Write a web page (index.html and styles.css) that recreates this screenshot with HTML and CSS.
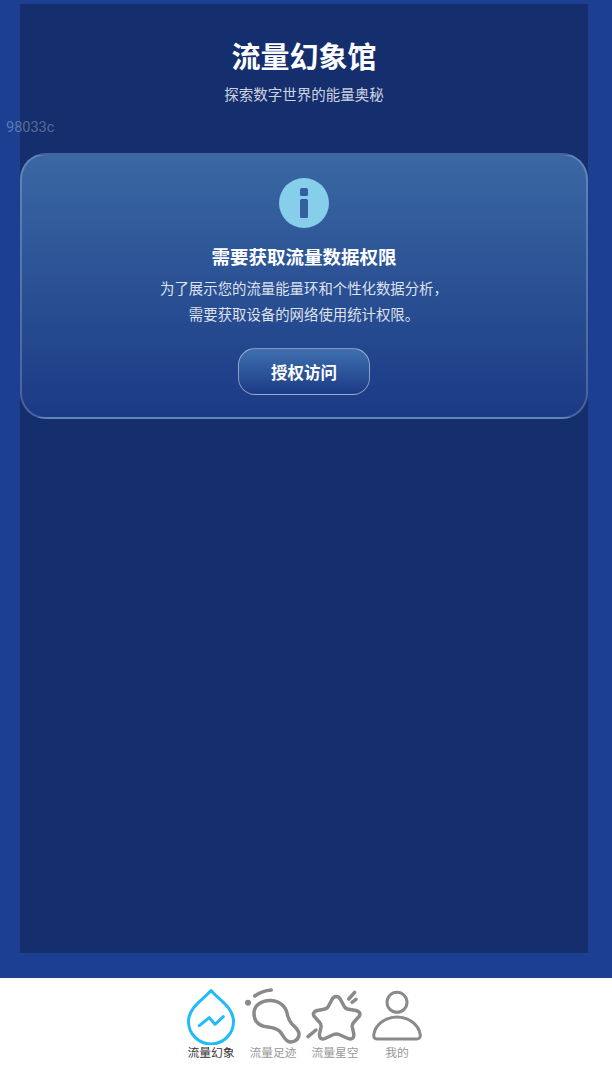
FILE: index.html
```html
<!DOCTYPE html>
<html lang="zh-CN">
<head>
    <meta charset="UTF-8">
    <meta name="viewport" content="width=device-width, initial-scale=1.0">
    <title>流量幻象馆</title>
    <link rel="stylesheet" href="styles.css">
</head>
<body>
    <div class="page">
        <main class="stage">
            <span class="debug-code">98033c</span>
            <div class="panel">
                <header class="head">
                    <h1>流量幻象馆</h1>
                    <p>探索数字世界的能量奥秘</p>
                </header>
                <section class="card">
                    <svg class="info-icon" viewBox="0 0 50 50" width="50" height="50">
                        <circle cx="25" cy="25" r="25" fill="#87ceeb"/>
                        <rect x="21" y="10" width="8" height="8" rx="1.5" fill="#34609f"/>
                        <rect x="21" y="21" width="8" height="19" rx="1.5" fill="#34609f"/>
                    </svg>
                    <h2>需要获取流量数据权限</h2>
                    <p>为了展示您的流量能量环和个性化数据分析，<br>需要获取设备的网络使用统计权限。</p>
                    <button type="button" class="auth-btn">授权访问</button>
                </section>
            </div>
        </main>
        <nav class="tabs">
            <a class="tab active" href="#">
                <svg viewBox="0 0 62 60" width="62" height="60" fill="none" stroke="currentColor" stroke-width="3" stroke-linecap="round" stroke-linejoin="round">
                    <path d="M31 5.500C38 14 53.500 22 53.500 36.500A22.500 22.500 0 0 1 8.500 36.500C8.500 22 24 14 31 5.500Z"/>
                    <path d="M19.300 40.700L29.300 32.700L35 39.300L43.300 31.700"/>
                </svg>
                <span>流量幻象</span>
            </a>
            <a class="tab" href="#">
                <svg viewBox="0 0 62 60" width="62" height="60" fill="none" stroke="currentColor" stroke-width="3.500" stroke-linecap="round" stroke-linejoin="round">
                    <path d="M12 28C12 20 20 15.500 28 15.500C37 15.500 43.500 21 45 28C46 33 47 36 50 39C54 43 57.500 46 57 50C56.500 55 51 58 46.500 56.500C42.500 55 41 50 38 46.500C35 43.500 31 42.500 26 42C20 41.500 16 39 14 36C12.500 33.500 12 31 12 28Z"/>
                    <path d="M12.700 11C17.500 7.500 23 5.500 29.300 5"/>
                    <circle cx="6" cy="17.700" r="1.300" fill="currentColor"/>
                </svg>
                <span>流量足迹</span>
            </a>
            <a class="tab" href="#">
                <svg viewBox="0 0 62 60" width="62" height="60" fill="none" stroke="currentColor" stroke-width="3.500" stroke-linecap="round" stroke-linejoin="round">
                    <path d="M28 14.500C30 10.500 34.500 10.500 36.500 14.500L40 21C41 23 42.500 24 44.500 24.300L52 25.500C56 26.500 57 29.500 54.500 32L50 37C48.500 38.500 48 40 48.300 42L49.800 49C50.300 53 47.500 55 44 53.500L35 49.500C33 48.700 31.500 48.700 29.500 49.500L21 53.500C17.500 55 15 53 15.500 49L17 42C17.300 40 16.800 38.500 15.300 37L10.800 32C8.300 29.500 9.300 26.500 13.300 25.500L20 24.300C22 24 23.500 23 24.500 21Z"/>
                    <path d="M44.700 14L50.700 7.300"/>
                    <path d="M48 17.300L52 14.300"/>
                    <path d="M4 51.700L12 45"/>
                </svg>
                <span>流量星空</span>
            </a>
            <a class="tab" href="#">
                <svg viewBox="0 0 62 60" width="62" height="60" fill="none" stroke="currentColor" stroke-width="3" stroke-linecap="round" stroke-linejoin="round">
                    <circle cx="31" cy="17.300" r="10"/>
                    <path d="M11 54H50.500Q54.800 54 54.200 49.500C52.500 39 42 32 31 32C20 32 9.500 39 7.800 49.500Q7.300 54 11 54Z"/>
                </svg>
                <span>我的</span>
            </a>
        </nav>
    </div>
</body>
</html>
```

FILE: styles.css
```css
body {
    font-family: "Noto Sans CJK SC", Roboto, sans-serif;
    margin: 0;
    padding: 0;
}
.page {
    display: flex;
    flex-direction: column;
    height: 1073px;
    overflow: hidden;
}
.stage {
    position: relative;
    flex: 1;
    display: flex;
    padding: 4px 24px 25px 20px;
    background-color: #1c3f92;
}
.debug-code {
    position: absolute;
    left: 6px;
    top: 118px;
    font-family: Roboto, sans-serif;
    font-size: 14.500px;
    line-height: 20px;
    color: rgba(255, 255, 255, 0.3);
}
.panel {
    flex: 1;
    background-color: #152e6e;
}
.head {
    text-align: center;
    height: 149px;
    box-sizing: border-box;
    padding-top: 31px;
}
.head h1 {
    margin: 0;
    font-size: 29px;
    line-height: 40px;
    font-weight: 700;
    color: #fff;
}
.head p {
    margin: 9px 0 0;
    font-size: 14.500px;
    line-height: 20px;
    color: rgba(255, 255, 255, 0.8);
}
.card {
    box-sizing: border-box;
    height: 266px;
    border: 2px solid rgba(255, 255, 255, 0.2);
    border-radius: 26px;
    background: linear-gradient(180deg, #3a68a3 0%, #1b3a85 100%);
    text-align: center;
    padding-top: 23px;
}
.info-icon {
    display: block;
    margin: 0 auto;
}
.card h2 {
    margin: 15px 0 0;
    font-size: 18.500px;
    line-height: 26px;
    font-weight: 700;
    color: #fff;
}
.card p {
    margin: 6px 0 0;
    font-size: 14.400px;
    line-height: 26px;
    color: rgba(255, 255, 255, 0.85);
}
.auth-btn {
    display: block;
    box-sizing: border-box;
    width: 132px;
    height: 47px;
    margin: 21px auto 0;
    border: 1px solid rgba(255, 255, 255, 0.45);
    border-radius: 17px;
    background: linear-gradient(180deg, #3f70b0 0%, #1c3a85 100%);
    font-family: inherit;
    font-size: 16.500px;
    font-weight: 700;
    color: #fff;
}
.tabs {
    height: 95px;
    box-sizing: border-box;
    padding-right: 4px;
    background-color: #fff;
    display: flex;
    justify-content: center;
}
.tab {
    width: 62px;
    padding-top: 7px;
    display: flex;
    flex-direction: column;
    align-items: center;
    color: #8a8a8a;
    text-decoration: none;
}
.tab svg {
    display: block;
    flex-shrink: 0;
    margin-bottom: -1px;
}
.tab span {
    font-size: 11.800px;
    line-height: 16px;
    color: #999;
}
.tab.active svg {
    color: #1fbcf9;
}
.tab.active span {
    color: #333;
}
```
